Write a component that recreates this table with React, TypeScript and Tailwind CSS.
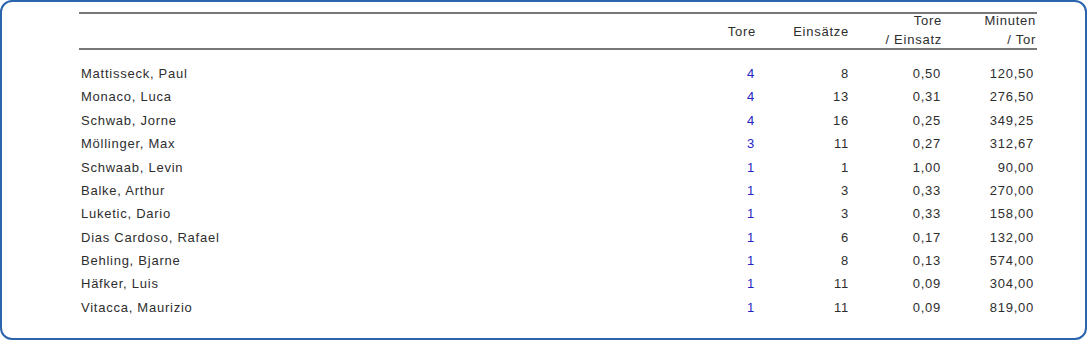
const ROWS = [
  { name: 'Mattisseck, Paul', tore: 4, einsaetze: 8, proEinsatz: '0,50', minuten: '120,50' },
  { name: 'Monaco, Luca', tore: 4, einsaetze: 13, proEinsatz: '0,31', minuten: '276,50' },
  { name: 'Schwab, Jorne', tore: 4, einsaetze: 16, proEinsatz: '0,25', minuten: '349,25' },
  { name: 'Möllinger, Max', tore: 3, einsaetze: 11, proEinsatz: '0,27', minuten: '312,67' },
  { name: 'Schwaab, Levin', tore: 1, einsaetze: 1, proEinsatz: '1,00', minuten: '90,00' },
  { name: 'Balke, Arthur', tore: 1, einsaetze: 3, proEinsatz: '0,33', minuten: '270,00' },
  { name: 'Luketic, Dario', tore: 1, einsaetze: 3, proEinsatz: '0,33', minuten: '158,00' },
  { name: 'Dias Cardoso, Rafael', tore: 1, einsaetze: 6, proEinsatz: '0,17', minuten: '132,00' },
  { name: 'Behling, Bjarne', tore: 1, einsaetze: 8, proEinsatz: '0,13', minuten: '574,00' },
  { name: 'Häfker, Luis', tore: 1, einsaetze: 11, proEinsatz: '0,09', minuten: '304,00' },
  { name: 'Vitacca, Maurizio', tore: 1, einsaetze: 11, proEinsatz: '0,09', minuten: '819,00' },
]

const COLS = 'grid grid-cols-[585px_93px_93px_93px_94px]'

export default function App() {
  return (
    <div className="w-[1090px] h-[341px] bg-white font-[family-name:'Liberation_Sans',Arial,sans-serif] text-[13px] text-[#2e2e2e] tracking-[0.75px]">
      <div className="w-[1087px] h-[340px] border-2 border-[#2a64ad] rounded-[12px] pl-[77px] pt-[10px]">
        <div className="w-[958px]">
          {/* Header */}
          <div className={`${COLS} h-[38px] border-y-2 border-[#777] items-center leading-[19px]`}>
            <div />
            <div className="text-right pr-[1px]">Tore</div>
            <div className="text-right pr-[1px]">Einsätze</div>
            <div className="text-right pr-[1px] -mt-[3px]">
              <div>Tore</div>
              <div>/ Einsatz</div>
            </div>
            <div className="text-right pr-[1px] -mt-[3px]">
              <div>Minuten</div>
              <div>/ Tor</div>
            </div>
          </div>

          {/* Rows */}
          <div className="pt-[12px]">
            {ROWS.map(row => (
              <div key={row.name} className={`${COLS} h-[23.4px] items-center`}>
                <div className="pl-[2px]">{row.name}</div>
                <div className="text-right pr-[2px] text-[#2424c4]">{row.tore}</div>
                <div className="text-right pr-[1px]">{row.einsaetze}</div>
                <div className="text-right pr-[2px]">{row.proEinsatz}</div>
                <div className="text-right pr-[3px]">{row.minuten}</div>
              </div>
            ))}
          </div>
        </div>
      </div>
    </div>
  )
}
